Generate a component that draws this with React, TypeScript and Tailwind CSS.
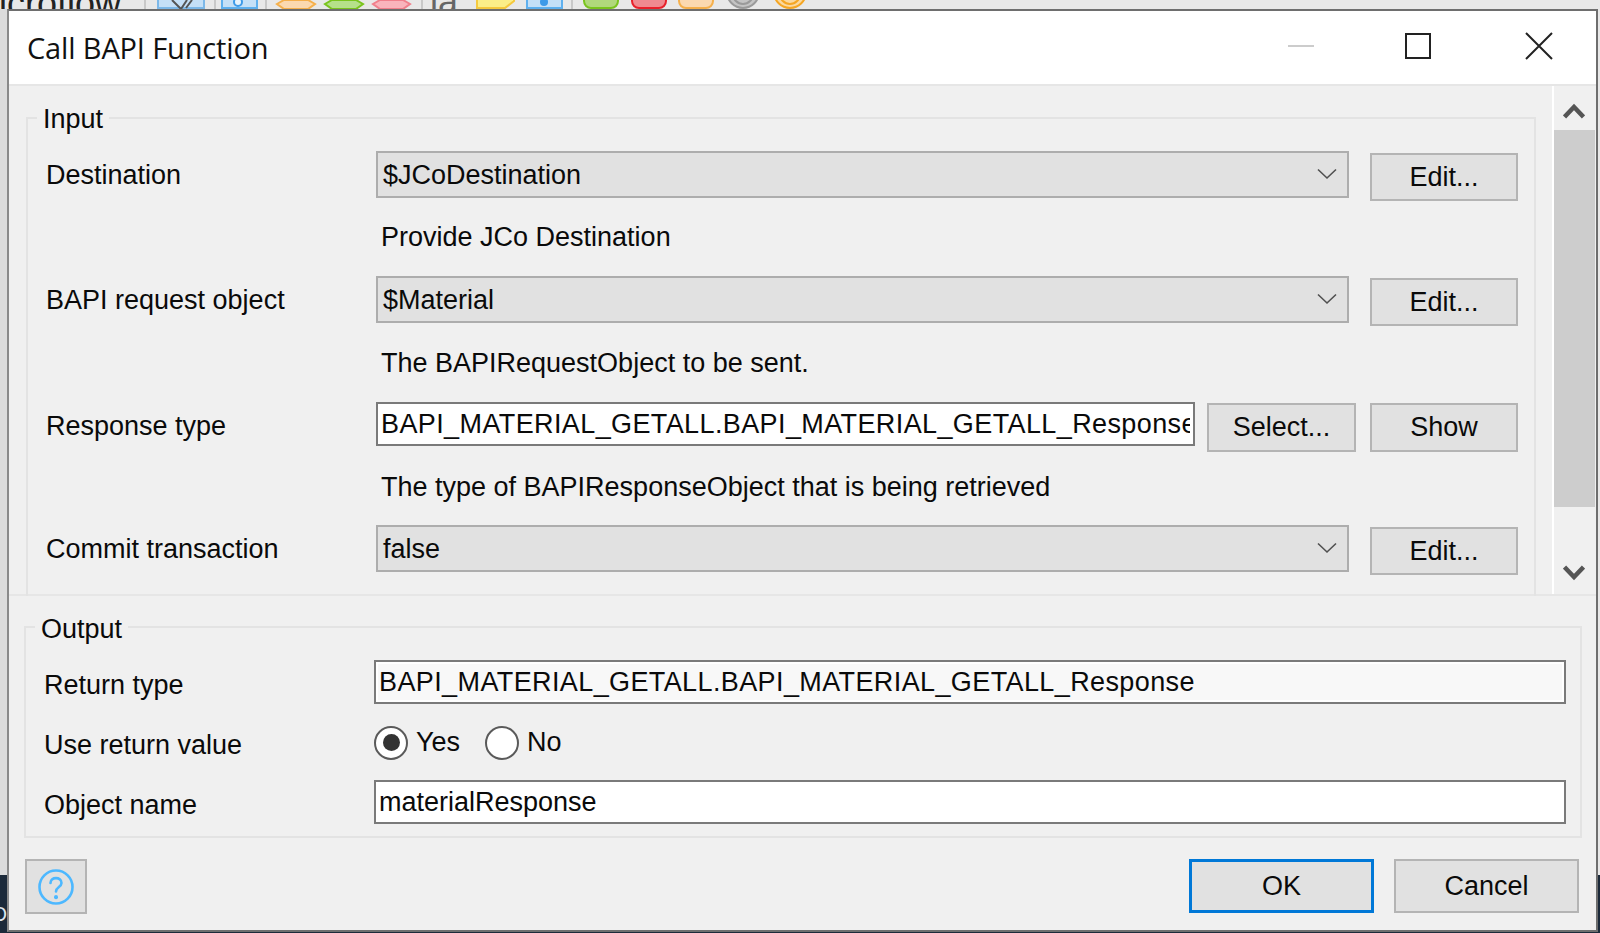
import React from "react";

const sans = "font-['Liberation_Sans',Arial,sans-serif]";

function Chevron() {
  return (
    <svg width="20" height="12" viewBox="0 0 20 12" fill="none" stroke="#505050" strokeWidth="1.6" className="mb-[3px]">
      <path d="M1 1.5 L10 10 L19 1.5" />
    </svg>
  );
}

function Button({ label, className }: { label: string; className: string }) {
  return (
    <button className={`flex items-center justify-center border-2 border-[#b4b4b4] bg-[#e1e1e1] text-[27px] text-[#0a0a0a] ${className}`}>
      {label}
    </button>
  );
}

function Label({ text }: { text: string }) {
  return <div className="flex h-[47px] w-[348px] shrink-0 items-center pl-[18px] pt-[2px] text-[27px] text-[#0a0a0a]">{text}</div>;
}

function ComboRow({ label, value }: { label: string; value: string }) {
  return (
    <div className="flex h-[50px] items-start">
      <Label text={label} />
      <div className="flex h-[47px] w-[973px] shrink-0 items-center justify-between border-2 border-[#adadad] bg-[#e1e1e1] pl-[5px] pr-[10px] pt-[2px] text-[27px] text-[#0a0a0a]">
        <span>{value}</span>
        <Chevron />
      </div>
      <Button label="Edit..." className="ml-[21px] mt-[2px] h-[48px] w-[148px]" />
    </div>
  );
}

function Hint({ text, height }: { text: string; height: string }) {
  return <div className={`flex items-center pb-[2px] pl-[353px] text-[27px] text-[#0a0a0a] ${height}`}>{text}</div>;
}

function TextField({ value, className }: { value: string; className: string }) {
  return (
    <input
      readOnly
      value={value}
      className={`h-[44px] border-2 border-[#7a7a7a] px-[3px] text-[27px] text-[#0a0a0a] outline-none ${className}`}
    />
  );
}

function Radio({ label, checked }: { label: string; checked?: boolean }) {
  return (
    <div className="flex items-center gap-[8px]">
      <div className="flex size-[34px] items-center justify-center rounded-full border-2 border-[#5a5a5a] bg-white">
        {checked && <div className="size-[17px] rounded-full bg-[#333333]" />}
      </div>
      <span className="text-[27px] text-[#0a0a0a]">{label}</span>
    </div>
  );
}

function Toolbar() {
  return (
    <svg width="1600" height="9" viewBox="0 0 1600 9" className="absolute left-0 top-0">
      <path d="M145 0V9M215 0V9M266 0V9M422 0V9M572 0V9" stroke="#c8c8c8" strokeWidth="2" />
      <rect x="158" y="-20" width="46" height="28" fill="#c5e0f7" stroke="#7db8e8" strokeWidth="2" />
      <path d="M172 0 L181 9 L187 0 M192 0 L186 8" stroke="#555" strokeWidth="2" fill="none" />
      <rect x="222" y="-20" width="35" height="28" fill="#c5e0f7" stroke="#5fb0ee" strokeWidth="2" />
      <circle cx="238" cy="2" r="4" fill="#e8f3fc" stroke="#3d9ae8" strokeWidth="2" />
      <path d="M284 0 L277 4 L284 9 H308 L315 4 L308 0Z" fill="#fbd9b0" stroke="#f5b04c" strokeWidth="2" />
      <path d="M332 0 L325 4 L332 9 H356 L363 4 L356 0Z" fill="#b5e08a" stroke="#7ac41e" strokeWidth="2" />
      <path d="M380 0 L373 4 L380 9 H403 L410 4 L403 0Z" fill="#f9b4bc" stroke="#f0808c" strokeWidth="2" />
      <path d="M477 -2 V8 H505 L514 1 V-2Z" fill="#fbee88" stroke="#f5c93e" strokeWidth="2" />
      <rect x="527" y="-20" width="35" height="28" fill="#c5e0f7" stroke="#5fb0ee" strokeWidth="2" />
      <circle cx="544" cy="2" r="4" fill="#3d9ae8" />
      <rect x="584" y="-20" width="34" height="28" rx="7" fill="#b0d87c" stroke="#7ac41e" strokeWidth="2" />
      <rect x="632" y="-20" width="34" height="28" rx="7" fill="#ef8a90" stroke="#e8202a" strokeWidth="2" />
      <rect x="679" y="-20" width="34" height="28" rx="7" fill="#fbd9b0" stroke="#f5b04c" strokeWidth="2" />
      <circle cx="743" cy="-8" r="16" fill="#c4c4c4" stroke="#9a9a9a" strokeWidth="2" />
      <circle cx="743" cy="-6" r="10" fill="none" stroke="#9a9a9a" strokeWidth="2" />
      <circle cx="790" cy="-8" r="16" fill="#fbd9a0" stroke="#f5a623" strokeWidth="2" />
      <circle cx="790" cy="-6" r="10" fill="none" stroke="#f5a623" strokeWidth="2" />
    </svg>
  );
}

export default function App() {
  return (
    <div className={`flex h-[933px] w-[1600px] flex-col overflow-hidden bg-[#e8e8e8] ${sans}`}>
      {/* app behind the dialog, only a strip of it shows */}
      <div className="relative h-[9px] shrink-0 overflow-hidden">
        <Toolbar />
        <span className="absolute bottom-[-13px] left-[-31px] text-[36px] leading-none text-[#222222]">Microflow</span>
        <span className="absolute bottom-[-11px] left-[430px] text-[36px] leading-none text-[#666666]">la</span>
      </div>

      <div className="flex min-h-0 flex-1">
        <div className="flex w-[7px] shrink-0 flex-col">
          <div className="h-[866px] bg-[#dcdcdc]" />
          <div className="flex flex-1 justify-end overflow-hidden bg-[#1c2a3a] pt-[29px] text-[20px] leading-none text-[#dfe6ee]">O</div>
        </div>

        <div className="flex min-w-0 flex-1 flex-col border-2 border-[#6e6e6e] border-l-[#8a8a8a] bg-[#f0f0f0]">
          <div className="flex h-[75px] shrink-0 items-center justify-between border-b-2 border-[#e6e6e6] bg-white pl-[18px] pr-[43px]">
            <span className="pt-[1px] font-['Open_Sans',sans-serif] text-[29px] tracking-[-0.15px] text-[#111111]">Call BAPI Function</span>
            <div className="flex items-center pb-[4px]">
              <div className="h-[2px] w-[26px] bg-[#cccccc]" />
              <div className="ml-[91px] size-[26px] border-2 border-[#222222]" />
              <svg width="28" height="28" viewBox="0 0 28 28" stroke="#222222" strokeWidth="2" className="ml-[94px]">
                <path d="M1 1 L27 27 M27 1 L1 27" />
              </svg>
            </div>
          </div>

          <div className="flex h-[510px] shrink-0 border-b-2 border-[#e6e6e6]">
            <div className="relative ml-[17px] mt-[31px] h-[479px] w-[1510px] border-x-2 border-t-2 border-[#e3e3e3] pt-[32px]">
              <div className="absolute left-[9px] top-[-16px] bg-[#f0f0f0] px-[6px] text-[27px] leading-[32px] text-[#0a0a0a]">Input</div>
              <ComboRow label="Destination" value="$JCoDestination" />
              <Hint text="Provide JCo Destination" height="h-[75px]" />
              <ComboRow label="BAPI request object" value="$Material" />
              <Hint text="The BAPIRequestObject to be sent." height="h-[76px]" />
              <div className="flex h-[50px] items-start">
                <Label text="Response type" />
                <TextField
                  value="BAPI_MATERIAL_GETALL.BAPI_MATERIAL_GETALL_Response"
                  className="w-[819px] shrink-0 bg-white tracking-[0.39px] shadow-[inset_0_0_0_2px_#ffffff]"
                />
                <Button label="Select..." className="ml-[12px] mt-[1px] h-[49px] w-[149px]" />
                <Button label="Show" className="ml-[14px] mt-[1px] h-[49px] w-[148px]" />
              </div>
              <Hint text="The type of BAPIResponseObject that is being retrieved" height="h-[73px]" />
              <ComboRow label="Commit transaction" value="false" />
            </div>

            <div className="ml-[16px] flex h-full flex-1 flex-col border-l-2 border-white">
              <div className="flex h-[44px] shrink-0 items-center justify-center pr-[2px] pt-[6px]">
                <svg width="22" height="16" viewBox="0 0 22 16" fill="none" stroke="#555555" strokeWidth="4.5">
                  <path d="M1.5 14 L11 4 L20.5 14" />
                </svg>
              </div>
              <div className="h-[377px] w-[41px] bg-[#cdcdcd]" />
              <div className="flex flex-1 items-end justify-center pb-[13px] pr-[2px]">
                <svg width="22" height="16" viewBox="0 0 22 16" fill="none" stroke="#555555" strokeWidth="4.5">
                  <path d="M1.5 2 L11 12 L20.5 2" />
                </svg>
              </div>
            </div>
          </div>

          <div className="relative ml-[15px] mt-[30px] h-[212px] w-[1558px] shrink-0 border-2 border-[#e3e3e3] pt-[32px]">
            <div className="absolute left-[9px] top-[-15px] bg-[#f0f0f0] px-[6px] text-[27px] leading-[32px] text-[#0a0a0a]">Output</div>
            <div className="flex h-[60px] items-start">
              <div className="flex h-[44px] w-[348px] shrink-0 items-center pl-[18px] pt-[6px] text-[27px] text-[#0a0a0a]">Return type</div>
              <TextField
                value="BAPI_MATERIAL_GETALL.BAPI_MATERIAL_GETALL_Response"
                className="w-[1192px] shrink-0 bg-[#f8f8f8] tracking-[0.39px] shadow-[inset_0_0_0_2px_#ffffff]"
              />
            </div>
            <div className="flex h-[60px] items-center pb-[15px]">
              <div className="w-[348px] shrink-0 pl-[18px] pt-[5px] text-[27px] text-[#0a0a0a]">Use return value</div>
              <div className="flex items-center gap-[25px]">
                <Radio label="Yes" checked />
                <Radio label="No" />
              </div>
            </div>
            <div className="flex items-start">
              <div className="flex h-[44px] w-[348px] shrink-0 items-center pl-[18px] pt-[6px] text-[27px] text-[#0a0a0a]">Object name</div>
              <TextField value="materialResponse" className="w-[1192px] shrink-0 bg-white" />
            </div>
          </div>

          <div className="flex items-start pl-[16px] pr-[17px] pt-[21px]">
            <button className="flex h-[55px] w-[62px] items-center justify-center border-2 border-[#b4b4b4] bg-[#e1e1e1]">
              <svg width="38" height="38" viewBox="0 0 38 38" fill="none" stroke="#4db8ff" strokeWidth="2.6" strokeLinecap="round">
                <circle cx="19" cy="19" r="16.5" />
                <path d="M13.5 15 C13.5 8.5 24.5 8.5 24.5 15 C24.5 19 19 19 19 23.5" />
                <path d="M19 29 L19 29.2" strokeWidth="4" />
              </svg>
            </button>
            <div className="ml-auto flex gap-[20px]">
              <button className="flex h-[54px] w-[185px] items-center justify-center border-[3px] border-[#0078d7] bg-[#e1e1e1] text-[27px] text-[#0a0a0a]">OK</button>
              <Button label="Cancel" className="h-[54px] w-[185px]" />
            </div>
          </div>
        </div>

        <div className="flex w-[2px] shrink-0 flex-col">
          <div className="h-[866px]" />
          <div className="flex-1 bg-[#1c2a3a]" />
        </div>
      </div>
      <div className="h-[1px] shrink-0 bg-[#1c2a3a]" />
    </div>
  );
}
